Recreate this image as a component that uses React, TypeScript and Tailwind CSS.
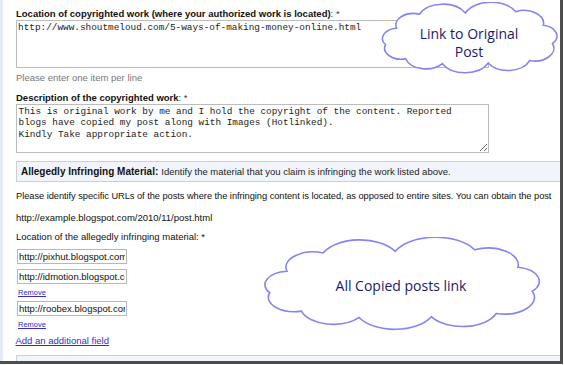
import React from "react";

const CLOUD_PATH =
  "M20 35 A19 19 0 0 1 45 12 A28 28 0 0 1 95 10 A31 31 0 0 1 150 8 A21 21 0 0 1 180 30 A18 18 0 0 1 190 60 A21 21 0 0 1 165 88 A25 25 0 0 1 120 92 A28 28 0 0 1 70 93 A23 23 0 0 1 30 85 A18 18 0 0 1 8 62 A17 17 0 0 1 20 35 Z";

function Cloud({ className, lines }: { className: string; lines: string[] }) {
  return (
    <div className={`absolute ${className}`}>
      <svg
        className="absolute inset-0 w-full h-full"
        viewBox="2 -8 194 118"
        preserveAspectRatio="none"
      >
        <path
          d={CLOUD_PATH}
          fill="#ffffff"
          stroke="#8585f2"
          strokeWidth={1.6}
          vectorEffect="non-scaling-stroke"
        />
      </svg>
      <div className="relative h-full flex flex-col items-center justify-center text-[#1a1a6e] text-[14px] leading-[18px] font-['Comic_Sans_MS','Open_Sans',sans-serif]">
        {lines.map((l) => (
          <span key={l}>{l}</span>
        ))}
      </div>
    </div>
  );
}

function UrlInput({ value, className }: { value: string; className: string }) {
  return (
    <input
      readOnly
      defaultValue={value}
      className={`block w-[110px] h-[15px] ml-[1px] px-[1px] border border-[#b8b8b8] text-[9.5px] text-[#111] outline-none font-['Liberation_Sans',Arial,sans-serif] ${className}`}
    />
  );
}

function RemoveLink({ className }: { className: string }) {
  return (
    <div className={`ml-[2px] text-[7.5px] leading-[9px] text-[#3030c8] underline ${className}`}>
      Remove
    </div>
  );
}

export default function App() {
  return (
    <div className="w-[564px] h-[365px] bg-white overflow-hidden font-['Liberation_Sans',Arial,sans-serif] text-[9.5px] leading-[11px] text-[#111]">
      <div className="relative w-[563px] h-[364px] border-r-[3px] border-b-[3px] border-[#4d4d4d] overflow-hidden">
        <div className="flex h-full">
          <div className="w-[3px] shrink-0 bg-[#e2eaf6]" />
          <div className="flex-1 min-w-0 pl-[13px]">
            {/* Location of copyrighted work */}
            <div className="pt-[8px] whitespace-nowrap">
              <span className="font-bold">
                Location of copyrighted work (where your authorized work is located)
              </span>
              <span className="text-[#444]">: *</span>
            </div>
            <textarea
              readOnly
              defaultValue="http://www.shoutmeloud.com/5-ways-of-making-money-online.html"
              className="block mt-[1px] w-[473px] h-[48px] pt-[1px] pl-[1px] border border-[#bcbcbc] text-[9.4px] leading-[11.5px] text-[#222] resize-none outline-none font-['Liberation_Mono','Courier_New',monospace]"
            />
            <div className="mt-[4px] text-[#777]">Please enter one item per line</div>

            {/* Description */}
            <div className="mt-[9px]">
              <span className="font-bold">Description of the copyrighted work</span>
              <span className="text-[#444]">: *</span>
            </div>
            <textarea
              readOnly
              defaultValue={
                "This is original work by me and I hold the copyright of the content. Reported\nblogs have copied my post along with Images (Hotlinked).\nKindly Take appropriate action."
              }
              className="block mt-[0.5px] w-[473px] h-[49px] pt-[1px] pl-[1.5px] border border-[#bcbcbc] text-[9.4px] leading-[11.7px] text-[#222] outline-none overflow-hidden font-['Liberation_Mono','Courier_New',monospace]"
            />

            {/* Section header */}
            <div className="mt-[8.5px] h-[21px] flex items-center pl-[4px] border border-r-0 border-[#cbd0d6] bg-[#f1f5fb] whitespace-nowrap">
              <span className="font-bold text-[10px] mr-[3px]">Allegedly Infringing Material:</span>
              <span className="text-[#222]">
                Identify the material that you claim is infringing the work listed above.
              </span>
            </div>

            <div className="mt-[9px] whitespace-nowrap text-[9.3px] tracking-[-0.05px]">
              Please identify specific URLs of the posts where the infringing content is located, as
              opposed to entire sites. You can obtain the post
            </div>
            <div className="mt-[9.5px]">http://example.blogspot.com/2010/11/post.html</div>
            <div className="mt-[8.5px]">Location of the allegedly infringing material: *</div>

            <UrlInput value="http://pixhut.blogspot.com" className="mt-[7px]" />
            <UrlInput value="http://idmotion.blogspot.com" className="mt-[4.5px]" />
            <RemoveLink className="mt-[4.5px]" />
            <UrlInput value="http://roobex.blogspot.com" className="mt-[4px]" />
            <RemoveLink className="mt-[3.5px]" />
            <div className="mt-[6px] -ml-[0.5px] text-[#3030c8] underline">Add an additional field</div>

            <div className="mt-[9.5px] h-[20px] border border-r-0 border-[#cbd0d6] bg-[#f1f5fb]" />
          </div>
        </div>

        <Cloud className="left-[380px] top-[2px] w-[178px] h-[72px] pt-[9px]" lines={["Link to Original", "Post"]} />
        <Cloud className="left-[261px] top-[237px] w-[280px] h-[94px] pt-[4px]" lines={["All Copied posts link"]} />
      </div>
    </div>
  );
}
